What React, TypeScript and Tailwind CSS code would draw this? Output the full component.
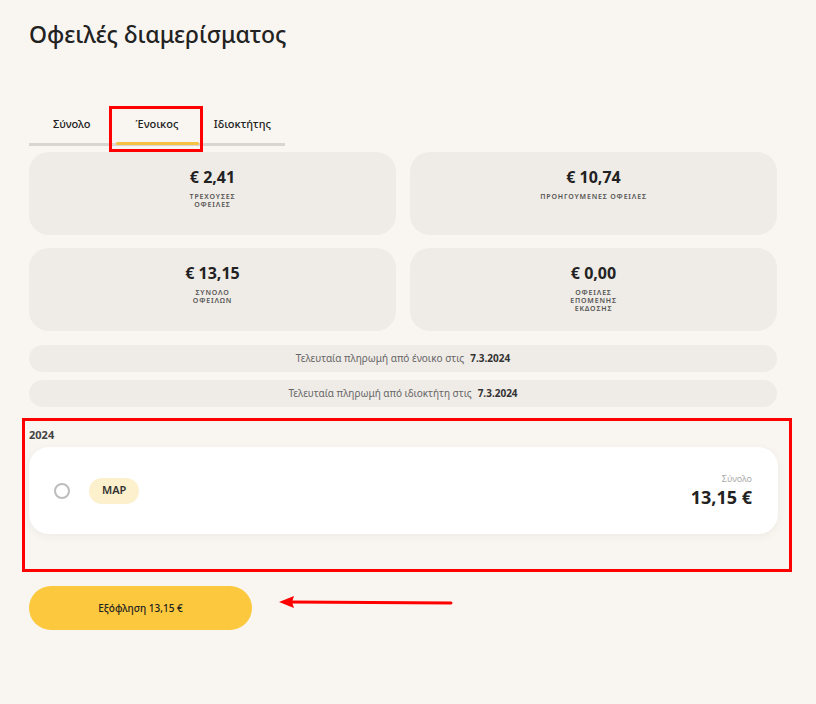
import React from "react";

const stats = [
  { amount: "€ 2,41", label: ["ΤΡΕΧΟΥΣΕΣ", "ΟΦΕΙΛΕΣ"] },
  { amount: "€ 10,74", label: ["ΠΡΟΗΓΟΥΜΕΝΕΣ ΟΦΕΙΛΕΣ"] },
  { amount: "€ 13,15", label: ["ΣΥΝΟΛΟ", "ΟΦΕΙΛΩΝ"] },
  { amount: "€ 0,00", label: ["ΟΦΕΙΛΕΣ", "ΕΠΟΜΕΝΗΣ", "ΕΚΔΟΣΗΣ"] },
];

const payments = [
  { text: "Τελευταία πληρωμή από ένοικο στις", date: "7.3.2024" },
  { text: "Τελευταία πληρωμή από ιδιοκτήτη στις", date: "7.3.2024" },
];

const tabs = ["Σύνολο", "Ένοικος", "Ιδιοκτήτης"];

const StatCard = ({ amount, label }: { amount: string; label: string[] }) => (
  <div className="h-[83px] rounded-[20px] bg-[#efebe6] flex flex-col items-center pt-[14px]">
    <div className="text-[16px] font-bold text-[#222] leading-[22px]">{amount}</div>
    <div className="mt-[5px] text-[7px] font-semibold tracking-[0.12em] text-[#555] leading-[8px] text-center">
      {label.map((l) => (
        <div key={l}>{l}</div>
      ))}
    </div>
  </div>
);

export default function App() {
  return (
    <div
      className="min-h-[704px] bg-[#f9f6f1] text-[#222]"
      style={{ fontFamily: '"Noto Sans", "Open Sans", sans-serif' }}
    >
      <div className="ml-[29px] w-[748px] pt-[18px]">
        <h1 className="text-[23px] font-medium leading-[32px] text-[#222]">Οφειλές διαμερίσματος</h1>

        {/* Tabs */}
        <div className="mt-[58px] w-[256px] grid grid-cols-3 border-b-[3px] border-[#d9d6d2]">
          {tabs.map((t) => {
            const active = t === "Ένοικος";
            return (
              <div key={t} className="relative h-[35px] flex items-start justify-center pt-[8px]">
                <span className="text-[11px] font-medium text-[#222]">{t}</span>
                {active && (
                  <>
                    <div className="absolute left-[2px] right-[1px] bottom-[-2px] h-[3px] bg-[#f5c242] rounded-full" />
                    <div className="absolute left-[-5px] right-[-3px] top-[-2px] bottom-[-9px] border-[3px] border-[#ff0000]" />
                  </>
                )}
              </div>
            );
          })}
        </div>

        {/* Stats */}
        <div className="mt-[6px] grid grid-cols-2 gap-x-[14px] gap-y-[13px]">
          {stats.map((s) => (
            <StatCard key={s.amount} amount={s.amount} label={s.label} />
          ))}
        </div>

        {/* Last payments */}
        <div className="mt-[14px] flex flex-col gap-[8px]">
          {payments.map((p) => (
            <div
              key={p.text}
              className="h-[27px] rounded-full bg-[#efebe6] flex items-center justify-center gap-[6px] text-[10px] text-[#666]"
            >
              <span>{p.text}</span>
              <span className="font-bold text-[#333]">{p.date}</span>
            </div>
          ))}
        </div>
      </div>

      {/* Highlighted year section */}
      <div className="ml-[22px] w-[770px] mt-[11px] border-[3px] border-[#ff0000] pl-[4px] pr-[11px] pt-[7px] pb-[35px]">
        <div className="text-[11px] font-bold text-[#444] leading-[14px]">2024</div>
        <div className="mt-[5px] h-[87px] rounded-[20px] bg-white shadow-[0_2px_10px_rgba(0,0,0,0.05)] flex items-center pl-[25px] pr-[26px]">
          <span className="w-[16px] h-[16px] rounded-full border-[2px] border-[#bdbdbd]" />
          <span className="ml-[19px] h-[26px] px-[13px] rounded-full bg-[#fdf0cc] flex items-center text-[11px] font-semibold text-[#333]">
            MAP
          </span>
          <div className="ml-auto flex flex-col items-end">
            <span className="text-[9px] text-[#aaa] leading-[12px]">Σύνολο</span>
            <span className="text-[18px] font-bold text-[#222] leading-[24px]">13,15 €</span>
          </div>
        </div>
      </div>

      {/* Pay button + arrow */}
      <div className="ml-[29px] mt-[14px] flex items-center">
        <button className="w-[223px] h-[44px] rounded-full bg-[#fcc83d] text-[10px] font-medium text-[#222]">
          Εξόφληση 13,15 €
        </button>
        <svg width="176" height="14" viewBox="0 0 176 14" className="ml-[27px] mt-[-10px]">
          <line x1="12" y1="6" x2="172" y2="7" stroke="#ff0000" strokeWidth="3" strokeLinecap="round" />
          <polygon points="0,6 15,0 13,6 15,12" fill="#ff0000" />
        </svg>
      </div>
    </div>
  );
}
